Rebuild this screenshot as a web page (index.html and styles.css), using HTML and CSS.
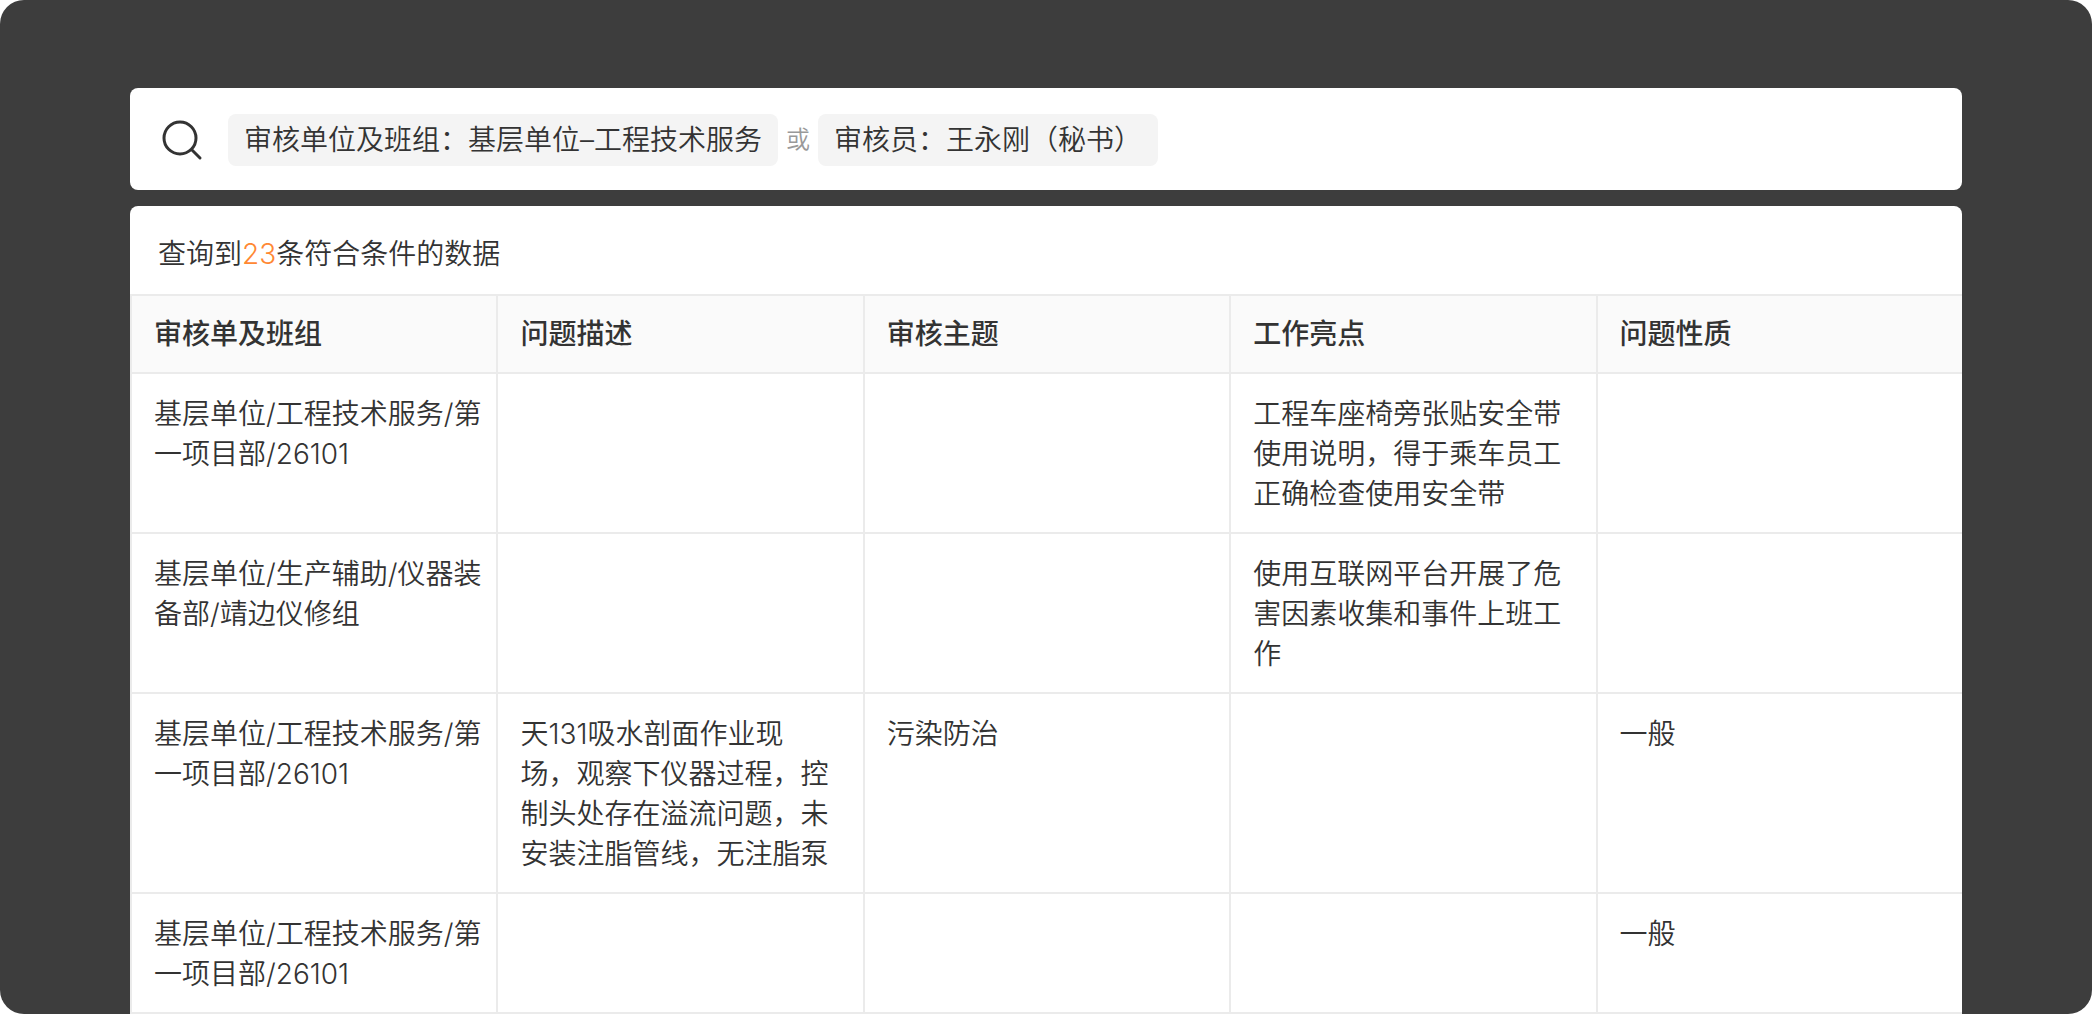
FILE: index.html
```html
<!doctype html>
<html lang="zh-CN">
<head>
	<meta charset="utf-8">
	<title>审核数据查询</title>
	<link rel="stylesheet" href="styles.css">
</head>
<body>
	<div class="container">
		<form class="search-bar">
			<button type="button" class="btn-search" aria-label="查询">
				<svg viewBox="0 0 44 44" width="44" height="44" fill="none" stroke="#333" stroke-width="3" stroke-linecap="round">
					<circle cx="20" cy="20" r="16"/>
					<path d="M32 32L40 40"/>
				</svg>
			</button>
			<span class="tag">审核单位及班组：基层单位–工程技术服务</span>
			<span class="or">或</span>
			<span class="tag">审核员：王永刚（秘书）</span>
		</form>
		<div class="result">
			<p class="summary">查询到<span class="count">23</span>条符合条件的数据</p>
			<table class="result-table">
				<thead>
					<tr>
						<th>审核单及班组</th>
						<th>问题描述</th>
						<th>审核主题</th>
						<th>工作亮点</th>
						<th>问题性质</th>
					</tr>
				</thead>
				<tbody>
					<tr>
						<td class="unit">基层单位/工程技术服务/第一项目部/26101</td>
						<td></td>
						<td></td>
						<td>工程车座椅旁张贴安全带使用说明，得于乘车员工正确检查使用安全带</td>
						<td></td>
					</tr>
					<tr>
						<td class="unit">基层单位/生产辅助/仪器装备部/靖边仪修组</td>
						<td></td>
						<td></td>
						<td>使用互联网平台开展了危害因素收集和事件上班工作</td>
						<td></td>
					</tr>
					<tr>
						<td class="unit">基层单位/工程技术服务/第一项目部/26101</td>
						<td>天131吸水剖面作业现场，观察下仪器过程，控制头处存在溢流问题，未安装注脂管线，无注脂泵</td>
						<td>污染防治</td>
						<td></td>
						<td>一般</td>
					</tr>
					<tr>
						<td class="unit">基层单位/工程技术服务/第一项目部/26101</td>
						<td></td>
						<td></td>
						<td></td>
						<td>一般</td>
					</tr>
				</tbody>
			</table>
		</div>
	</div>
</body>
</html>
```
FILE: styles.css
```css
*
{
	box-sizing:border-box;
}
body
{
	margin:0;
	background-color:#fff;
	color:#333;
	font-family:Inter,"Noto Sans CJK SC",sans-serif;
	font-size:28px;
	font-weight:350;
	line-height:40px;
}
.container
{
	min-height:100vh;
	padding:88px 130px 0;
	background-color:#3d3d3d;
	border-radius:24px;
}
.search-bar
{
	display:flex;
	align-items:center;
	gap:8px;
	padding:26px 30px 24px;
	background-color:#fff;
	border-radius:8px;
}
.btn-search
{
	display:flex;
	margin-right:16px;
	padding:0;
	border:0;
	background:none;
	cursor:pointer;
}
.tag
{
	padding:6px 16px;
	background-color:#f4f4f4;
	border-radius:8px;
	white-space:nowrap;
}
.or
{
	color:#999;
	font-size:24px;
}
.result
{
	margin-top:16px;
	background-color:#fff;
	border-radius:8px 8px 0 0;
}
.summary
{
	margin:0;
	padding:28px 28px 20px;
}
.count
{
	color:#ff8833;
}
.result-table
{
	width:100%;
	table-layout:fixed;
	border-spacing:0;
}
th,td
{
	border-left:2px solid #ebebeb;
	border-bottom:2px solid #ebebeb;
	text-align:left;
	vertical-align:top;
}
th
{
	padding:18px 22px;
	border-top:2px solid #ebebeb;
	background-color:#fafafa;
	font-weight:500;
}
td
{
	padding:20px 32px 18px 22px;
}
.unit
{
	padding-right:0;
}
```
